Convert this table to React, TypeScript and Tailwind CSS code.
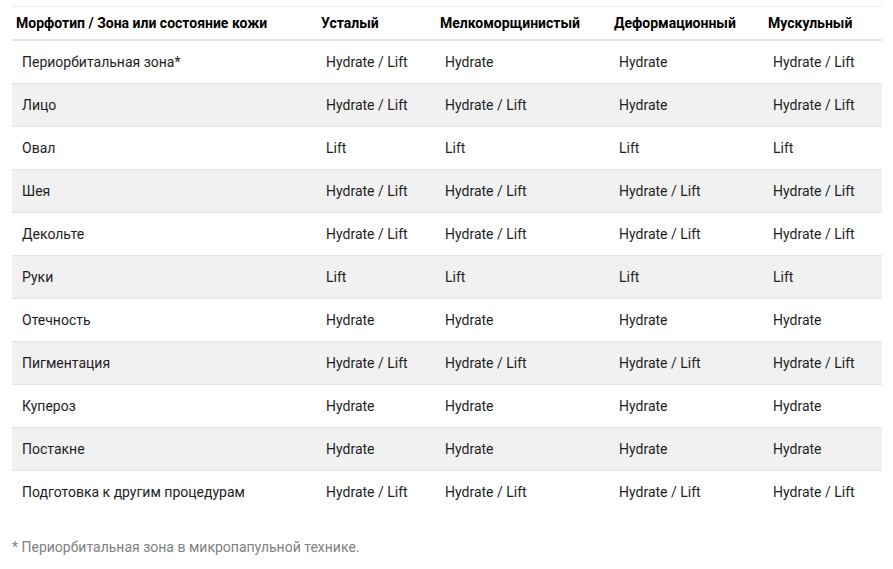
import React from "react";

const cols = ["Усталый", "Мелкоморщинистый", "Деформационный", "Мускульный"];
const HL = "Hydrate / Lift";
const H = "Hydrate";
const L = "Lift";

const rows: [string, string, string, string, string][] = [
  ["Периорбитальная зона*", HL, H, H, HL],
  ["Лицо", HL, HL, H, HL],
  ["Овал", L, L, L, L],
  ["Шея", HL, HL, HL, HL],
  ["Декольте", HL, HL, HL, HL],
  ["Руки", L, L, L, L],
  ["Отечность", H, H, H, H],
  ["Пигментация", HL, HL, HL, HL],
  ["Купероз", H, H, H, H],
  ["Постакне", H, H, H, H],
  ["Подготовка к другим процедурам", HL, HL, HL, HL],
];

export default function App() {
  return (
    <div
      className="w-[893px] h-[569px] bg-white text-[14px] text-[#1e1e1e]"
      style={{ fontFamily: "Roboto, 'Noto Sans', sans-serif" }}
    >
      <div className="pt-[6px] pl-[12px]">
        <div className="w-[870px] border-t border-[#ececec]">
          <div className="grid grid-cols-[304px_119px_174px_154px_119px] h-[34px] items-center border-b-2 border-[#e6e6e6] font-bold text-black">
            <div className="pl-[4px]">Морфотип / Зона или состояние кожи</div>
            {cols.map((c) => (
              <div key={c} className="pl-[5px]">
                {c}
              </div>
            ))}
          </div>
          {rows.map((r, i) => (
            <div
              key={r[0]}
              className={`grid grid-cols-[304px_119px_174px_154px_119px] h-[43px] items-center ${
                i === rows.length - 1 ? "" : "border-b border-[#e4e4e4]"
              } ${i % 2 === 1 ? "bg-[#f1f1f1]" : "bg-white"}`}
            >
              {r.map((c, j) => (
                <div key={j} className="pl-[10px]">
                  {c}
                </div>
              ))}
            </div>
          ))}
        </div>
        <div className="mt-[23px] text-[#808080] text-[14px]">* Периорбитальная зона в микропапульной технике.</div>
      </div>
    </div>
  );
}
